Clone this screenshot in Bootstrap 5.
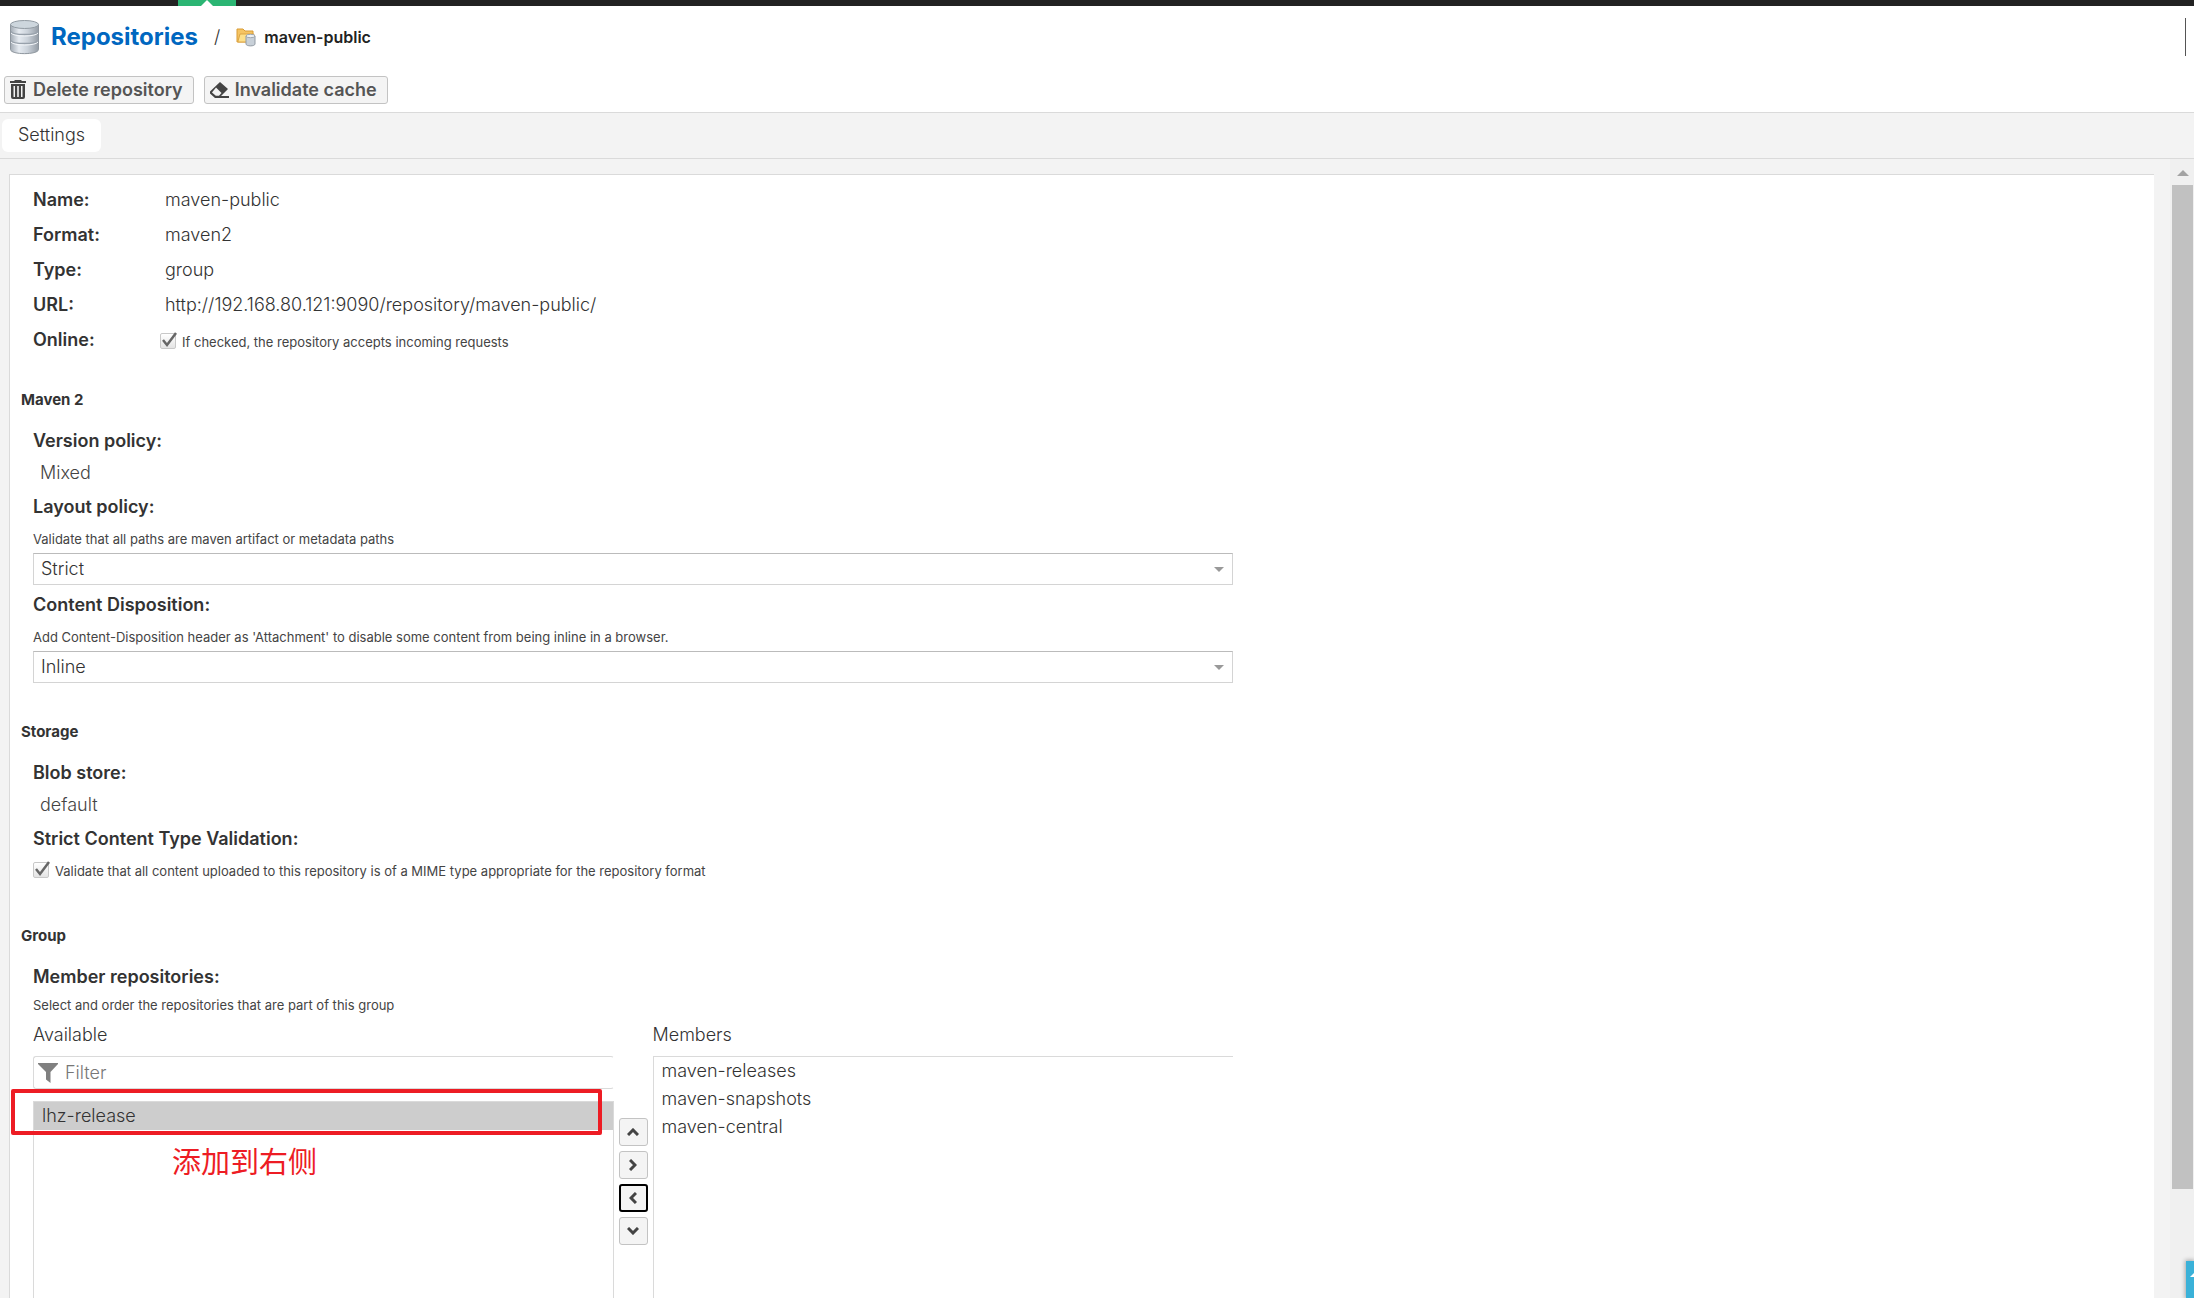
<!DOCTYPE html>
<html lang="en">
<head>
<meta charset="utf-8">
<meta name="viewport" content="width=device-width, initial-scale=1">
<title>Repositories / maven-public</title>
<link href="https://cdn.jsdelivr.net/npm/bootstrap@5.3.0/dist/css/bootstrap.min.css" rel="stylesheet">
<style>
  body { font-family: Inter, "Noto Sans CJK SC", sans-serif; font-size: 18px; font-weight: 300; line-height: 24px; color: #333; background: #fff; }
  .top-strip { height: 6px; background: #222; padding-left: 178px; }
  .top-strip .active-mark { width: 58px; height: 6px; background: #2bb573; }
  .active-mark::after { content: ""; border: 6px solid transparent; border-top: 0; border-bottom-color: #fff; }
  .page-head { height: 65px; padding: 0 8px 4px 9px; }
  .page-title { font-size: 24px; line-height: 32px; font-weight: 700; color: #0067c0; padding-left: 2px; }
  .crumb { font-size: 16px; font-weight: 600; color: #222; }
  .head-rule { width: 1px; height: 38px; background: #555; }
  .tool-row { padding: 5px 4px 8px; gap: 10px; }
  .btn-tool { display: flex; align-items: center; gap: 6px; height: 28px; padding: 0 10px 0 4px; border: 1px solid #c3c3c3; border-radius: 3px; background: #f4f4f4; color: #555; font-size: 18px; line-height: 24px; font-weight: 600; }
  .tab-row { border-top: 1px solid #dadada; border-bottom: 1px solid #dadada; background: #f3f3f3; padding: 6px 2px; height: 47px; }
  .tab-row .nav-link { padding: 4px 16px; height: 33px; border-radius: 6px; background: #fff; color: #333; }
  .scroll-zone { background: #f3f3f3; padding: 15px 16px 0 9px; }
  .sheet { background: #fff; border: 1px solid #dadada; border-right: 0; border-bottom: 0; padding: 13px 11px 0; }
  .inset { max-width: 1223px; width: 100%; padding: 0 11px 0 12px; }
  .sect + .inset { padding-top: 18px; }
  .field-name { font-weight: 600; }
  .info-row { display: grid; grid-template-columns: 127px 1fr; height: 35px; align-items: start; }
  .info-text { padding-left: 5px; }
  .hint { font-size: 13px; font-weight: 400; line-height: 20px; color: #444; }
  .field-name + .hint { padding-top: 10px; }
  .field-name.tight + .hint { padding-top: 6px; }
  .sect { font-size: 15px; line-height: 22px; font-weight: 700; margin: 26px 0 0; }
  .sect.after-pick { margin-top: 38px; }
  .sect.after-hint { margin-top: 44px; }
  .readout { padding: 8px 0 10px 7px; color: #444; }
  .tick { appearance: none; width: 16px; height: 16px; border: 1px solid #c8c8c8; border-radius: 2px; background: linear-gradient(#fff, #e4e4e4); display: block; }
  .tick-wrap { position: relative; display: block; width: 18px; height: 18px; padding-top: 1px; }
  .tick-wrap svg { position: absolute; left: 1px; top: 0; pointer-events: none; }
  .pick { height: 32px; padding: 0 30px 0 7px; border: 1px solid #d4d4d4; border-top-color: #bbb; border-radius: 0; font-size: 18px; font-weight: 300; line-height: 24px; color: #333; background-size: 10px 5px; background-position: right 8px center;
    background-image: url("data:image/svg+xml,%3Csvg xmlns='http://www.w3.org/2000/svg' viewBox='0 0 10 5'%3E%3Cpath d='M0 0h10L5 5z' fill='%23999'/%3E%3C/svg%3E"); }
  .list-title { padding-bottom: 9px; }
  .filter-box { height: 33px; border: 1px solid #dadada; border-right-color: transparent; border-radius: 3px; padding-left: 4px; gap: 7px; margin-bottom: 12px; }
  .filter-box input { border: 0; padding: 0; outline: 0; width: 100%; color: #333; background: none; font-weight: 300; }
  .filter-box input::placeholder { color: #777; }
  .pool { border: 1px solid #dadada; border-bottom: 0; }
  .pool.open-right { border-right: 0; }
  .pool .list-group-item { border: 0; border-radius: 0; padding: 0 8px; line-height: 28px; color: #333; background: none; }
  .pool .chosen { background: #cdcdcd; }
  .move-col { width: 39px; padding: 95px 5px 0; gap: 5px; }
  .btn-move { width: 29px; height: 28px; padding: 0; display: flex; align-items: center; justify-content: center; background: #f4f4f4; border: 1px solid #c3c3c3; border-radius: 3px; }
  .btn-move.has-focus { border: 2px solid #000; }
  .callout-frame { position: absolute; left: -23px; right: 11px; top: -13px; height: 46px; border: 4px solid #ed1c24; border-radius: 2px; }
  .callout-note { position: absolute; left: 138px; top: 38px; font-family: "Noto Sans CJK SC", sans-serif; font-weight: 400; font-size: 29px; line-height: 40px; color: #ed1c24; }
  .bar { width: 24px; background: #f0f0f0; padding: 11px 1px 0 2px; }
  .bar-thumb { height: 1004px; background: #c1c1c1; margin-top: 9px; }
  .side-widget { position: absolute; right: 0; bottom: 0; width: 8px; height: 37px; background: #3ab1d8; box-shadow: 0 0 4px 1px rgba(0,0,0,.3); }
</style>
<script src="https://cdn.jsdelivr.net/npm/bootstrap@5.3.0/dist/js/bootstrap.bundle.min.js"></script>
</head>
<body class="d-flex flex-column vh-100 overflow-hidden">
<div class="top-strip"><div class="active-mark d-flex justify-content-center"></div></div>

<header class="page-head d-flex align-items-center">
  <svg width="32" height="36" viewBox="0 0 32 36" class="me-2 flex-shrink-0">
    <defs><linearGradient id="dbBody"><stop offset="0" stop-color="#a3abb4"/><stop offset=".3" stop-color="#e6ebf1"/><stop offset=".6" stop-color="#ccd3db"/><stop offset="1" stop-color="#949ca5"/></linearGradient></defs>
    <path d="M1.500 5.500v25c0 5.500 28 5.500 28 0v-25z" fill="url(#dbBody)" stroke="#8e969e"/>
    <path d="M2 12.500c2 4 25 4 27 0M2 21.500c2 4 25 4 27 0" fill="none" stroke="#98a1ab" stroke-width="1.500"/>
    <path d="M2 14c2 4 25 4 27 0M2 23c2 4 25 4 27 0" fill="none" stroke="#f3f6f9"/>
    <ellipse cx="15.500" cy="5.500" rx="14" ry="4" fill="#cdd6dd" stroke="#929ba3"/>
  </svg>
  <a href="#" class="page-title text-decoration-none">Repositories</a>
  <span class="px-3">/</span>
  <svg width="20" height="20" viewBox="0 0 20 20" class="me-2 flex-shrink-0">
    <path d="M1 15V2h6l2 2h8v11z" fill="#f5c463" stroke="#d99b35"/>
    <path d="M2 14 4 7h14l-2 8H2z" fill="#fde08b" stroke="#dda544"/>
    <path d="M10 9v8c0 2.500 9 2.500 9 0V9z" fill="#c8d0d8" stroke="#929ba4"/>
    <ellipse cx="14.500" cy="9" rx="4.500" ry="1.700" fill="#edf1f5" stroke="#a0a8b0"/>
  </svg>
  <span class="crumb">maven-public</span>
  <span class="head-rule ms-auto"></span>
</header>

<div class="tool-row d-flex">
  <button type="button" class="btn btn-tool">
    <svg width="18" height="20" viewBox="0 0 18 20" fill="#444"><path d="M6 0h6l1 1h4v2H1V1h4z"/><path fill-rule="evenodd" d="M2 4h14v13q0 2-2 2H4q-2 0-2-2zM4.500 6v11H6V6zm3.700 0v11h1.600V6zM12 6v11h1.500V6z"/></svg>
    Delete repository</button>
  <button type="button" class="btn btn-tool">
    <svg width="20" height="18" viewBox="0 0 20 18"><path d="M11 1 19 8 12 15H20V17H6L1 12.500V10.500z" fill="#444"/><path d="M7 6.500 12.500 12 10 14.800H6.800L3 11.500z" fill="#f4f4f4"/></svg>
    Invalidate cache</button>
</div>

<nav class="tab-row nav"><a class="nav-link" href="#">Settings</a></nav>

<div class="d-flex flex-grow-1 overflow-hidden">
  <main class="scroll-zone flex-grow-1 d-flex overflow-hidden">
    <form class="sheet flex-grow-1 d-flex flex-column">
      <div class="inset">
        <div class="info-row"><span class="field-name">Name:</span><span class="info-text">maven-public</span></div>
        <div class="info-row"><span class="field-name">Format:</span><span class="info-text">maven2</span></div>
        <div class="info-row"><span class="field-name">Type:</span><span class="info-text">group</span></div>
        <div class="info-row"><span class="field-name">URL:</span><span class="info-text">http://192.168.80.121:9090/repository/maven-public/</span></div>
        <div class="info-row"><span>
          <span class="field-name">Online:</span></span>
          <label class="hint d-flex pt-1 gap-1"><span class="tick-wrap"><input type="checkbox" class="tick" checked><svg width="16" height="16" viewBox="0 0 16 16"><path d="m2 8 4 5L15 1" fill="none" stroke="#666" stroke-width="2.500"/></svg></span>If checked, the repository accepts incoming requests</label></div>
      </div>

      <h2 class="sect">Maven 2</h2>
      <div class="inset">
        <div class="field-name">Version policy:</div>
        <div class="readout">Mixed</div>
        <label class="field-name d-block" for="layoutPolicy">Layout policy:</label>
        <div class="hint">Validate that all paths are maven artifact or metadata paths</div>
        <select id="layoutPolicy" class="form-select pick mt-1"><option>Strict</option></select>
        <label class="field-name d-block mt-2" for="disposition">Content Disposition:</label>
        <div class="hint">Add Content-Disposition header as 'Attachment' to disable some content from being inline in a browser.</div>
        <select id="disposition" class="form-select pick mt-1"><option>Inline</option></select>
      </div>

      <h2 class="sect after-pick">Storage</h2>
      <div class="inset">
        <div class="field-name">Blob store:</div>
        <div class="readout">default</div>
        <div class="field-name">Strict Content Type Validation:</div>
        <label class="hint d-flex gap-1"><span class="tick-wrap"><input type="checkbox" class="tick" checked><svg width="16" height="16" viewBox="0 0 16 16"><path d="m2 8 4 5L15 1" fill="none" stroke="#666" stroke-width="2.500"/></svg></span>Validate that all content uploaded to this repository is of a MIME type appropriate for the repository format</label>
      </div>

      <h2 class="sect after-hint">Group</h2>
      <div class="inset flex-grow-1 d-flex flex-column">
        <div class="field-name tight">Member repositories:</div>
        <div class="hint">Select and order the repositories that are part of this group</div>
        <div class="d-flex flex-grow-1">
          <div class="d-flex flex-column flex-fill w-50 pt-2">
            <label for="poolFilter" class="list-title">Available</label>
            <div class="filter-box d-flex align-items-center">
              <svg width="20" height="20" viewBox="0 0 20 20" class="flex-shrink-0"><path d="M0 0h20v1l-7.500 8v11L8 16.500V9L0 1z" fill="#808080"/></svg>
              <input id="poolFilter" type="text" placeholder="Filter">
            </div>
            <div class="pool flex-grow-1 position-relative">
              <div class="list-group"><div class="list-group-item chosen">lhz-release</div></div>
              <div class="callout-frame"></div>
              <div class="callout-note">添加到右侧</div>
            </div>
          </div>
          <div class="move-col d-flex flex-column flex-shrink-0 mt-2">
            <button type="button" class="btn btn-move" aria-label="Up"><svg width="12" height="8" viewBox="0 0 12 8"><path d="M1 7l5-5 5 5" fill="none" stroke="#444" stroke-width="3"/></svg></button>
            <button type="button" class="btn btn-move" aria-label="Add"><svg width="8" height="12" viewBox="0 0 8 12"><path d="M1 1l5 5-5 5" fill="none" stroke="#444" stroke-width="3"/></svg></button>
            <button type="button" class="btn btn-move has-focus" aria-label="Remove"><svg width="8" height="12" viewBox="0 0 8 12"><path d="M7 1 2 6l5 5" fill="none" stroke="#444" stroke-width="3"/></svg></button>
            <button type="button" class="btn btn-move" aria-label="Down"><svg width="12" height="8" viewBox="0 0 12 8"><path d="M1 1l5 5 5-5" fill="none" stroke="#444" stroke-width="3"/></svg></button>
          </div>
          <div class="d-flex flex-column flex-fill w-50 pt-2">
            <div class="list-title">Members</div>
            <div class="pool open-right flex-grow-1"><div class="list-group">
              <div class="list-group-item">maven-releases</div>
              <div class="list-group-item">maven-snapshots</div>
              <div class="list-group-item">maven-central</div>
            </div></div>
          </div>
        </div>
      </div>
    </form>
  </main>
  <div class="bar flex-shrink-0 d-flex flex-column">
    <svg class="align-self-center" width="12" height="6" viewBox="0 0 12 6"><path d="M6 0l6 6H0z" fill="#a3a3a3"/></svg>
    <div class="bar-thumb"></div>
  </div>
</div>
<div class="side-widget"><svg width="8" height="37" viewBox="0 0 8 37" class="d-block"><path d="M4 16l4-4v4z" fill="#fff"/></svg></div>
</body>
</html>
